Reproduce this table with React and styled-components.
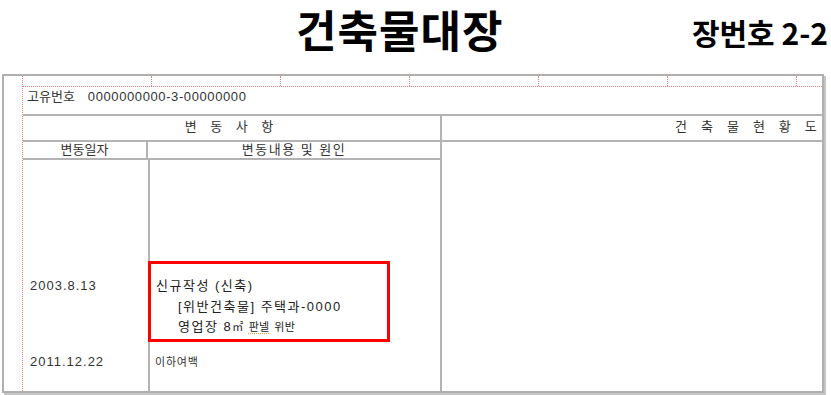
import React from 'react';
import styled, { createGlobalStyle } from 'styled-components';

const GlobalStyle = createGlobalStyle`
  html, body {
    margin: 0;
    padding: 0;
    background: #ffffff;
  }
  body {
    font-family: "Liberation Sans", "Noto Sans CJK KR", sans-serif;
    color: #333333;
  }
`;

const rulerCols = [0, 1, 2, 3, 4, 5, 6];

const App = () => {
    return (
        <Page>
            <GlobalStyle />
            <Head>
                <Title>건축물대장</Title>
                <PageNo>장번호 2-2</PageNo>
            </Head>
            <Frame>
                <Gutter />
                <Sheet>
                    <Ruler>
                        {rulerCols.map((i) => (
                            <RulerCell key={i} $last={i === rulerCols.length - 1} />
                        ))}
                    </Ruler>
                    <IdRow>
                        고유번호<IdNumber>0000000000-3-00000000</IdNumber>
                    </IdRow>
                    <Table>
                        <LeftSection>
                            <SectionHead>변 동 사 항</SectionHead>
                            <SubHead>
                                <SubCell $narrow>변동일자</SubCell>
                                <SubCell>변동내용 및 원인</SubCell>
                            </SubHead>
                            <HistoryBody>
                                <DateCell $offset={15}>2003.8.13</DateCell>
                                <ContentCell>
                                    <Highlight>
                                        <Line>신규작성 (신축)</Line>
                                        <Line $indent>[위반건축물] 주택과-0000</Line>
                                        <Line $indent>
                                            영업장 8<Small>㎡</Small> <Marked>판넬</Marked> <Small>위반</Small>
                                        </Line>
                                    </Highlight>
                                </ContentCell>
                                <DateCell $offset={0}>2011.12.22</DateCell>
                                <ContentCell>
                                    <Note>이하여백</Note>
                                </ContentCell>
                            </HistoryBody>
                        </LeftSection>
                        <RightSection>
                            <SectionHead $right>건 축 물 현 황 도</SectionHead>
                            <Drawing />
                        </RightSection>
                    </Table>
                </Sheet>
            </Frame>
        </Page>
    );
};

const Page = styled.div`
width : 831px;
height : 395px;
overflow : hidden;
`;

const Head = styled.div`
display : flex;
justify-content : space-between;
align-items : flex-start;
height : 74px;
padding : 0 3px 0 294px;
box-sizing : border-box;
font-family : "Noto Sans CJK KR", sans-serif;
color : #000000;
`;

const Title = styled.h1`
margin : 0;
padding : 0 2px;
font-size : 44px;
line-height : 58px;
font-weight : 700;
letter-spacing : 1px;
white-space : nowrap;
`;

const PageNo = styled.div`
margin-top : 14px;
font-size : 30px;
line-height : 36px;
font-weight : 700;
white-space : nowrap;
`;

const Frame = styled.div`
display : flex;
width : 822px;
height : 319px;
margin-left : 2px;
box-sizing : border-box;
border : 2px solid #b0b0b0;
box-shadow : 2px 2px 0 #c4c4c4;
background : #ffffff;
`;

const Gutter = styled.div`
width : 18px;
flex-shrink : 0;
`;

const Sheet = styled.div`
flex : 1;
display : flex;
flex-direction : column;
border-left : 1px dotted #f07878;
`;

const Ruler = styled.div`
display : grid;
grid-template-columns : repeat(6, 129px) 1fr;
height : 10px;
border-bottom : 1px dotted #f07878;
`;

const RulerCell = styled.div`
border-right : ${(p) => (p.$last ? 'none' : '1px dotted #f07878')};
`;

const IdRow = styled.div`
height : 27px;
padding-left : 4px;
font-size : 13px;
line-height : 20px;
color : #333333;
`;

const IdNumber = styled.span`
margin-left : 13px;
letter-spacing : 0.6px;
`;

const Table = styled.div`
flex : 1;
display : grid;
grid-template-columns : 419px 1fr;
border-top : 2px solid #b3b3b3;
`;

const LeftSection = styled.div`
display : flex;
flex-direction : column;
border-right : 2px solid #b3b3b3;
`;

const RightSection = styled.div`
display : flex;
flex-direction : column;
`;

const SectionHead = styled.div`
height : 24px;
line-height : 22px;
font-size : 13px;
letter-spacing : ${(p) => (p.$right ? '5.2px' : '5px')};
text-align : ${(p) => (p.$right ? 'right' : 'center')};
border-bottom : 2px solid #b3b3b3;
color : #333333;
`;

const SubHead = styled.div`
display : grid;
grid-template-columns : 125px 1fr;
height : 16px;
border-bottom : 2px solid #b3b3b3;
`;

const SubCell = styled.div`
font-size : 13px;
line-height : 16px;
text-align : center;
letter-spacing : ${(p) => (p.$narrow ? '0' : '1.5px')};
border-right : ${(p) => (p.$narrow ? '2px solid #b3b3b3' : 'none')};
color : #333333;
`;

const HistoryBody = styled.div`
flex : 1;
display : grid;
grid-template-columns : 127px 1fr;
align-content : start;
row-gap : 10px;
padding-top : 101px;
background : linear-gradient(
    to right,
    transparent 125px,
    #b3b3b3 125px,
    #b3b3b3 127px,
    transparent 127px
);
`;

const DateCell = styled.div`
padding : ${(p) => p.$offset}px 0 0 7px;
font-size : 13px;
line-height : 20px;
letter-spacing : 1px;
color : #333333;
`;

const ContentCell = styled.div`
font-size : 13px;
color : #222222;
`;

const Highlight = styled.div`
width : 242px;
height : 81px;
margin-left : -2px;
box-sizing : border-box;
border : 3px solid #ff0000;
padding : 12px 0 0 5px;
`;

const Line = styled.div`
line-height : 20.5px;
letter-spacing : 1.5px;
padding-left : ${(p) => (p.$indent ? '22px' : '0')};
`;

const Small = styled.span`
font-size : 11px;
letter-spacing : 0.5px;
`;

const Marked = styled.span`
font-size : 11px;
letter-spacing : 0;
text-decoration : underline dotted #f0a040;
text-underline-offset : 2px;
`;

const Note = styled.div`
padding : 2px 0 0 5px;
font-size : 11px;
line-height : 16px;
letter-spacing : 0.8px;
color : #333333;
`;

const Drawing = styled.div`
flex : 1;
`;

export default App;
